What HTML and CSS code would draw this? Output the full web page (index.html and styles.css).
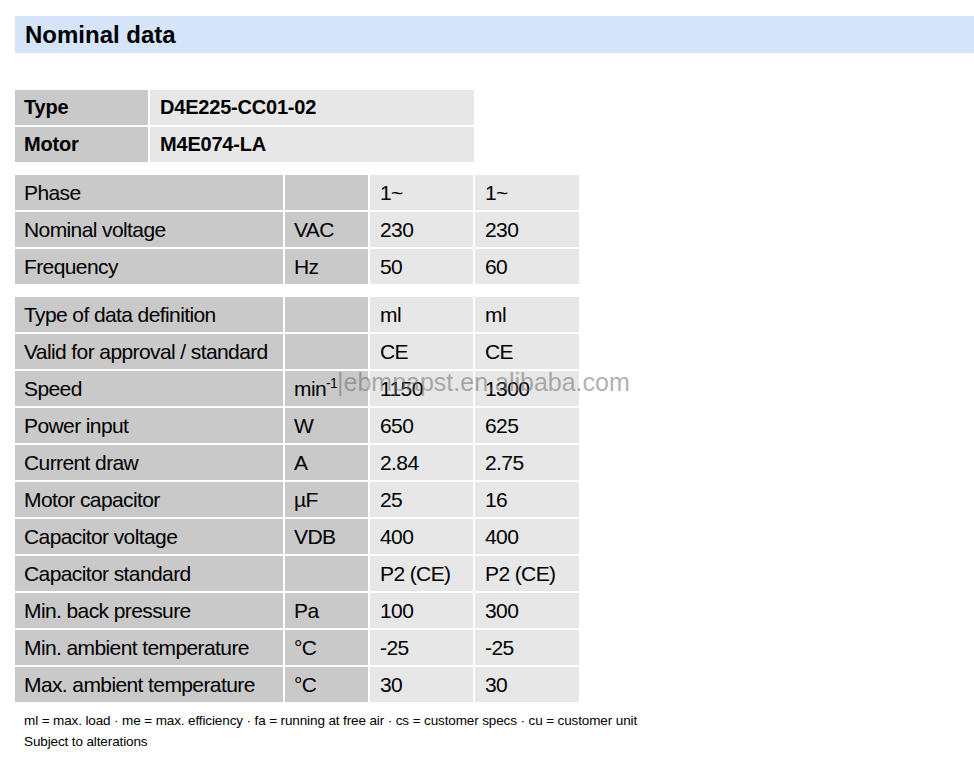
FILE: index.html
```html
<!DOCTYPE html>
<html>
<head>
<meta charset="utf-8">
<link rel="stylesheet" href="styles.css">
</head>
<body>
<div class="page">
  <h1 class="title">Nominal data</h1>

  <div class="ident">
    <div class="cell key">Type</div><div class="cell val">D4E225-CC01-02</div>
    <div class="cell key">Motor</div><div class="cell val">M4E074-LA</div>
  </div>

  <div class="data first">
    <div class="cell key">Phase</div><div class="cell key"></div><div class="cell val">1~</div><div class="cell val">1~</div>
    <div class="cell key">Nominal voltage</div><div class="cell key">VAC</div><div class="cell val">230</div><div class="cell val">230</div>
    <div class="cell key">Frequency</div><div class="cell key">Hz</div><div class="cell val">50</div><div class="cell val">60</div>
  </div>

  <div class="data second">
    <div class="cell key">Type of data definition</div><div class="cell key"></div><div class="cell val">ml</div><div class="cell val">ml</div>
    <div class="cell key">Valid for approval / standard</div><div class="cell key"></div><div class="cell val">CE</div><div class="cell val">CE</div>
    <div class="cell key">Speed</div><div class="cell key">min<span class="sup">-1</span></div><div class="cell val">1150</div><div class="cell val">1300</div>
    <div class="cell key">Power input</div><div class="cell key">W</div><div class="cell val">650</div><div class="cell val">625</div>
    <div class="cell key">Current draw</div><div class="cell key">A</div><div class="cell val">2.84</div><div class="cell val">2.75</div>
    <div class="cell key">Motor capacitor</div><div class="cell key">µF</div><div class="cell val">25</div><div class="cell val">16</div>
    <div class="cell key">Capacitor voltage</div><div class="cell key">VDB</div><div class="cell val">400</div><div class="cell val">400</div>
    <div class="cell key">Capacitor standard</div><div class="cell key"></div><div class="cell val">P2 (CE)</div><div class="cell val">P2 (CE)</div>
    <div class="cell key">Min. back pressure</div><div class="cell key">Pa</div><div class="cell val">100</div><div class="cell val">300</div>
    <div class="cell key">Min. ambient temperature</div><div class="cell key">°C</div><div class="cell val">-25</div><div class="cell val">-25</div>
    <div class="cell key">Max. ambient temperature</div><div class="cell key">°C</div><div class="cell val">30</div><div class="cell val">30</div>
    <div class="watermark">|ebmpapst.en.alibaba.com</div>
  </div>

  <div class="notes">
    <p>ml = max. load · me = max. efficiency · fa = running at free air · cs = customer specs · cu = customer unit</p>
    <p>Subject to alterations</p>
  </div>
</div>
</body>
</html>
```

FILE: styles.css
```css
html, body {
  margin: 0;
  padding: 0;
  background: #ffffff;
}

.page {
  padding: 16px 0 0 15px;
  font-family: "Liberation Sans", Arial, sans-serif;
  color: #000;
}

.title {
  margin: 0;
  height: 37px;
  line-height: 37px;
  padding-left: 10px;
  background: #d6e4fa;
  font-size: 24px;
  font-weight: bold;
}

.cell {
  height: 35px;
  line-height: 35px;
  padding-left: 9px;
  white-space: nowrap;
  overflow: hidden;
}

.key { background: #c9c9c9; }
.val { background: #e7e7e7; padding-left: 10px; }

.ident {
  margin-top: 37px;
  display: grid;
  grid-template-columns: 133px 324px;
  gap: 2px;
  font-size: 20px;
  font-weight: bold;
  letter-spacing: -0.2px;
}

.data {
  display: grid;
  grid-template-columns: 268px 83px 103px 104px;
  gap: 2px;
  width: 564px;
  font-size: 21px;
  letter-spacing: -0.6px;
}

.data.first { margin-top: 13px; }
.data.second { margin-top: 13px; position: relative; }

.sup {
  font-size: 14px;
  vertical-align: 8px;
  line-height: 0;
}

.watermark {
  position: absolute;
  left: 322px;
  top: 70px;
  font-size: 25px;
  line-height: 30px;
  letter-spacing: 0;
  color: rgba(110, 110, 110, 0.55);
  white-space: nowrap;
  pointer-events: none;
}

.notes {
  margin-top: 8px;
  padding-left: 9px;
  font-size: 13.5px;
  letter-spacing: -0.12px;
}

.notes p {
  margin: 0;
  line-height: 21px;
}
```
